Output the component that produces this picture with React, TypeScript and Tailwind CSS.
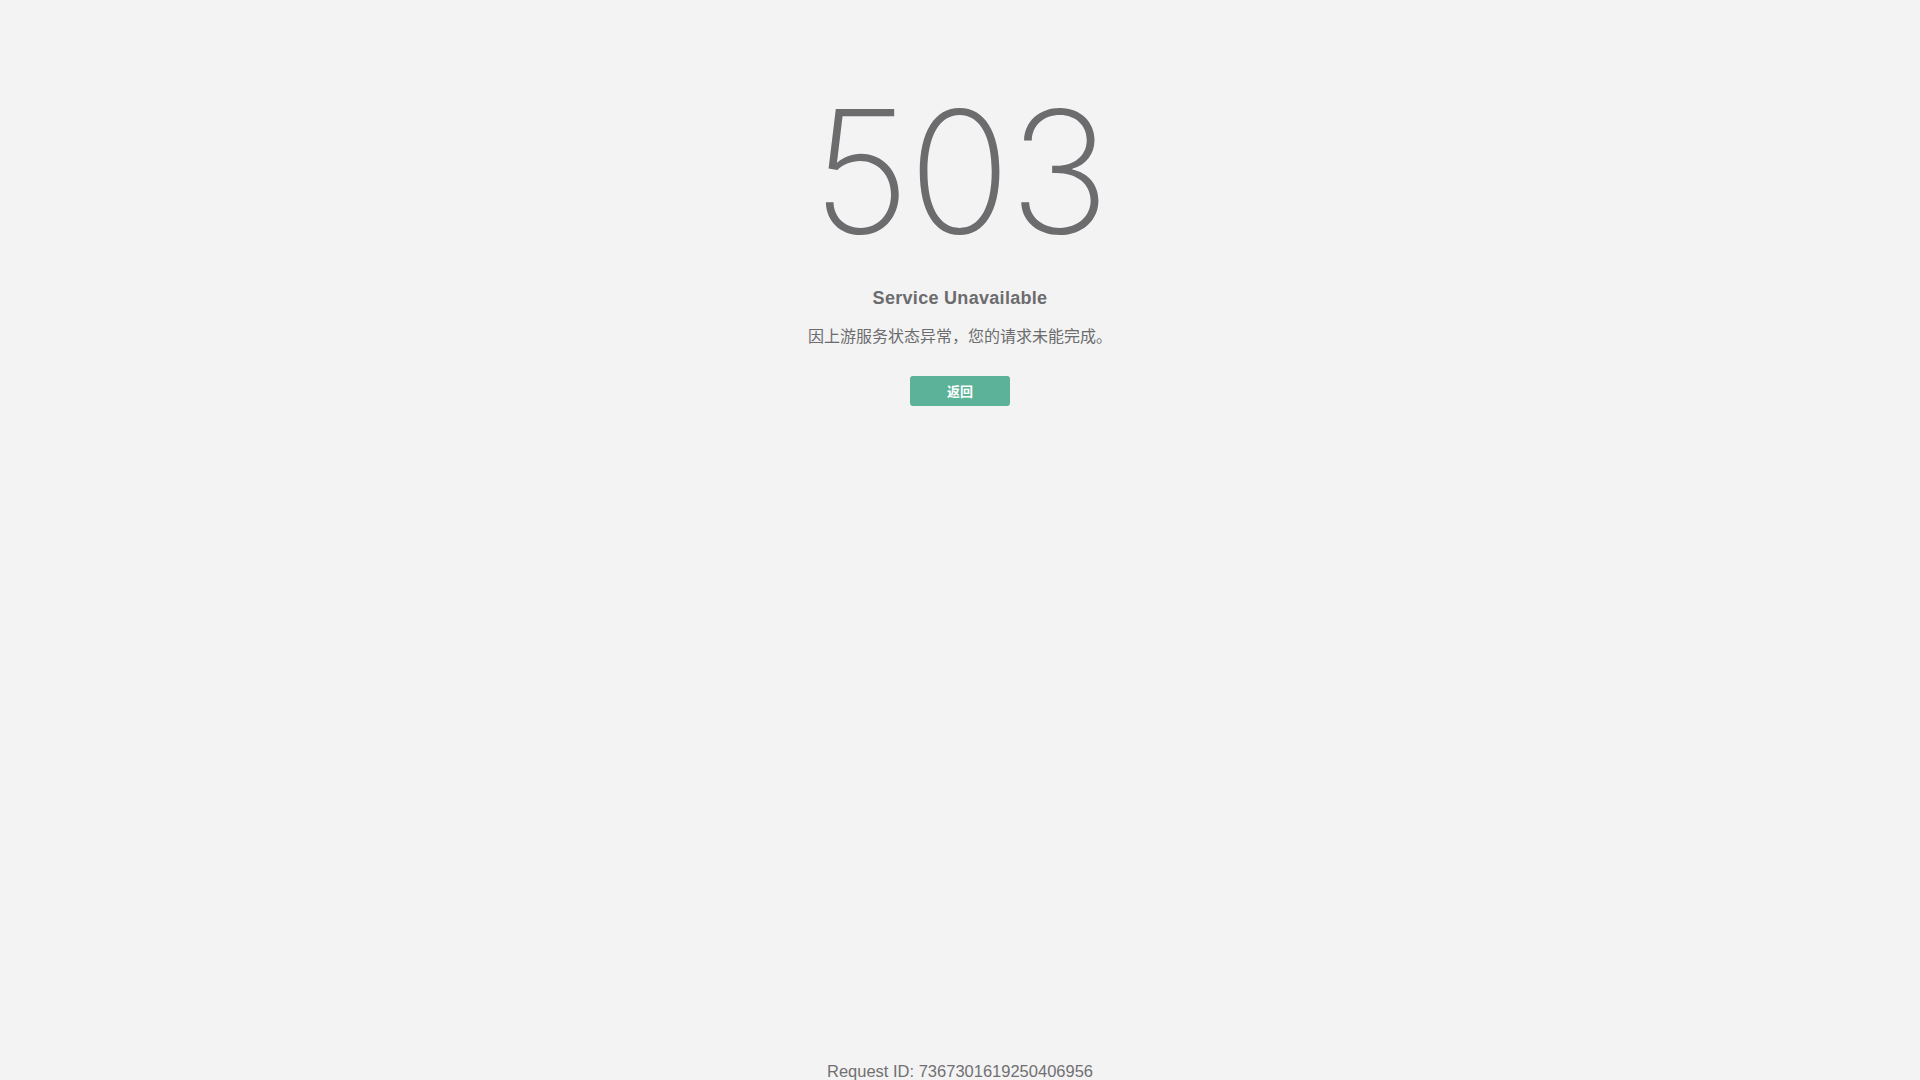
import React from "react";

export default function App() {
  return (
    <div className="flex h-[1083px] w-full flex-col items-center bg-[#f3f3f3] font-['Liberation_Sans','Noto_Sans_CJK_SC',sans-serif] text-[#6c6c6e]">
      <div className="mt-[86px] font-['Inter','Liberation_Sans',sans-serif] text-[170px] leading-none font-extralight tracking-[-2px]">
        503
      </div>
      <div className="mt-[30px] text-[18px] leading-[24px] font-bold tracking-[0.3px]">
        Service Unavailable
      </div>
      <div className="mt-[14px] font-['Noto_Sans_CJK_SC',sans-serif] text-[16px] leading-[22px]">
        因上游服务状态异常，您的请求未能完成。
      </div>
      <button className="mt-[30px] flex h-[30px] w-[100px] items-center justify-center rounded-[3px] bg-[#5bb298] font-['Noto_Sans_CJK_SC',sans-serif] text-[13px] font-semibold text-white">
        返回
      </button>
      <div className="mt-auto text-[16.5px] leading-[24px] text-[#707072]">
        Request ID: 7367301619250406956
      </div>
    </div>
  );
}
